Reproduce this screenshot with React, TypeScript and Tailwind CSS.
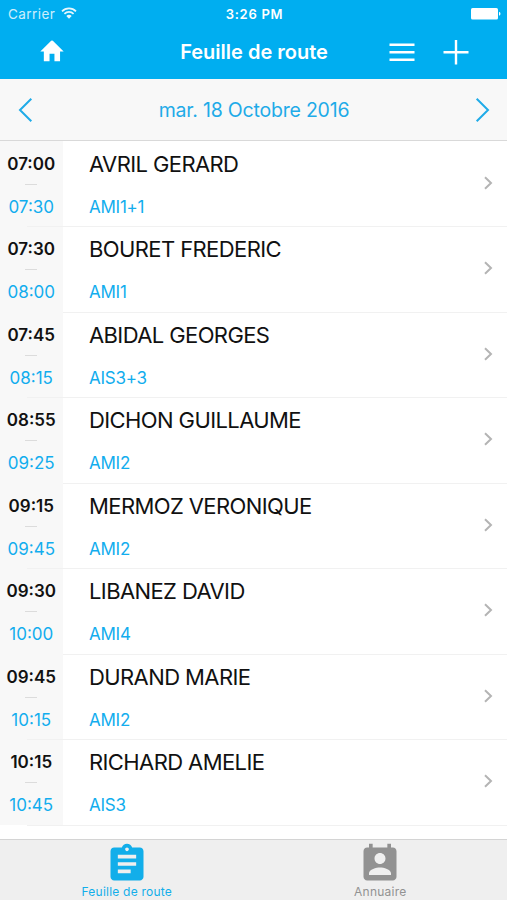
import type { ReactNode } from "react";

interface Visit {
  start: string;
  end: string;
  name: string;
  code: string;
}

const visits: Visit[] = [
  { start: "07:00", end: "07:30", name: "AVRIL GERARD", code: "AMI1+1" },
  { start: "07:30", end: "08:00", name: "BOURET FREDERIC", code: "AMI1" },
  { start: "07:45", end: "08:15", name: "ABIDAL GEORGES", code: "AIS3+3" },
  { start: "08:55", end: "09:25", name: "DICHON GUILLAUME", code: "AMI2" },
  { start: "09:15", end: "09:45", name: "MERMOZ VERONIQUE", code: "AMI2" },
  { start: "09:30", end: "10:00", name: "LIBANEZ DAVID", code: "AMI4" },
  { start: "09:45", end: "10:15", name: "DURAND MARIE", code: "AMI2" },
  { start: "10:15", end: "10:45", name: "RICHARD AMELIE", code: "AIS3" },
];

function StatusBar() {
  return (
    <div className="grid h-7 grid-cols-3 items-center pl-2 pr-[6px] text-[13.5px] leading-none">
      <div className="flex items-center gap-[6px]">
        <span className="pt-px tracking-[0.45px] opacity-80">Carrier</span>
        <svg width="16" height="12" viewBox="0 0 16 12" fill="none" stroke="currentColor" strokeWidth="1.7" className="-mt-[3px] opacity-90">
          <path d="M1 4.3C4.9 .3 11.1 .3 15 4.3" />
          <path d="M3.4 6.9C6 4.2 10 4.2 12.6 6.9" />
          <path d="M5.3 8.9C6.8 7.3 9.2 7.3 10.7 8.9L8 11.7z" fill="currentColor" stroke="none" />
        </svg>
      </div>
      <span className="text-center text-[13px] font-semibold tracking-[0.7px]">3:26 PM</span>
      <svg width="30" height="12" viewBox="0 0 30 12" fill="currentColor" className="justify-self-end">
        <rect x="0" y="0" width="27" height="11.5" rx="1.6" />
        <path d="M28 3.8c2 .8 2 3.2 0 4z" />
      </svg>
    </div>
  );
}

function NavBar() {
  return (
    <div className="flex h-[51px] items-start pl-[38px] pr-[37px] pt-[9px]">
      <button aria-label="Accueil" className="flex h-[30px] w-[90px] items-start">
        <svg width="28" height="29" viewBox="0 0 24 24" preserveAspectRatio="none" fill="currentColor">
          <path d="M9.9 20v-6.2h4.2V20h4.8v-8H22L12.7 3.2Q12 2.6 11.3 3.2L2 12h3v8z" />
        </svg>
      </button>
      <h1 className="flex-1 text-center text-[20px] font-semibold leading-[31px]">Feuille de route</h1>
      <div className="flex w-[90px] justify-end gap-[26px] pt-[1px]">
        <svg width="28" height="28" viewBox="0 0 28 28" stroke="currentColor" strokeWidth="2.4">
          <path d="M1.5 6.8h25M1.5 14.3h25M1.5 21.8h25" />
        </svg>
        <svg width="28" height="28" viewBox="0 0 28 28" stroke="currentColor" strokeWidth="2.4">
          <path d="M1.5 14.3h25M14 2v24.5" />
        </svg>
      </div>
    </div>
  );
}

function DayPicker() {
  return (
    <div className="flex h-[62px] items-center justify-between border-b border-[#d9d9d9] bg-[#f8f8f8] pl-[17px] pr-4 text-[#1fabe8]">
      <svg width="16" height="26" viewBox="0 0 16 26" fill="none" stroke="currentColor" strokeWidth="2">
        <path d="M14.3 1.7L3 13l11.3 11.3" />
      </svg>
      <span className="pt-[2px] text-[19.5px] leading-none tracking-[-0.2px]">mar. 18 Octobre 2016</span>
      <svg width="16" height="26" viewBox="0 0 16 26" fill="none" stroke="currentColor" strokeWidth="2">
        <path d="M1.7 1.7L13 13 1.7 24.3" />
      </svg>
    </div>
  );
}

function VisitRow({ start, end, name, code }: Visit) {
  return (
    <li className="relative flex h-[85.5px]">
      <div className="flex w-[62.5px] flex-col items-center bg-[#f8f8f8] pt-[12.5px] text-[17px] leading-5">
        <span className="font-semibold text-[#111]">{start}</span>
        <span className="mt-[10px] h-px w-3 bg-[#dcdcdc]" />
        <span className="mt-[12px] text-[#12adee]">{end}</span>
      </div>
      <div className="flex flex-1 flex-col pl-[26.5px] pt-[9.5px]">
        <span className="text-[22px] leading-[26px] tracking-[-0.6px] text-[#111]">{name}</span>
        <span className="mt-5 text-[17px] leading-5 tracking-[-0.25px] text-[#12adee]">{code}</span>
      </div>
      <svg width="10" height="14" viewBox="0 0 10 14" fill="none" stroke="#b4b4b4" strokeWidth="2" className="mr-[14px] mt-[34.5px]">
        <path d="M2 1.2L8 7 2 12.8" />
      </svg>
      <div className="absolute bottom-[-0.5px] left-[27px] right-0 h-px bg-[#f1f1f1]" />
    </li>
  );
}

function Tab({ label, className, children }: { label: string; className: string; children: ReactNode }) {
  return (
    <button className={`flex flex-1 flex-col items-center pt-[1.8px] ${className}`}>
      <svg width="44" height="44" viewBox="0 0 24 24" fill="currentColor">
        {children}
      </svg>
      <span className="-mt-[0.8px] text-[12px] leading-[14px] tracking-[0.22px]">{label}</span>
    </button>
  );
}

export default function App() {
  return (
    <div className="flex h-[900px] w-[507px] flex-col overflow-hidden bg-white font-['Inter',sans-serif]">
      <header className="h-[79px] bg-[#00aef0] text-white">
        <StatusBar />
        <NavBar />
      </header>
      <DayPicker />
      <ul className="flex-1">
        {visits.map((v) => (
          <VisitRow key={v.name} {...v} />
        ))}
      </ul>
      <nav className="flex h-[61px] border-t border-[#d4d4d4] bg-[#efefef]">
        <Tab label="Feuille de route" className="text-[#12aeea]">
          <path d="M19 3h-4.18C14.4 1.84 13.3 1 12 1c-1.3 0-2.4.84-2.82 2H5c-1.1 0-2 .9-2 2v14c0 1.1.9 2 2 2h14c1.1 0 2-.9 2-2V5c0-1.1-.9-2-2-2zm-7 0c.55 0 1 .45 1 1s-.45 1-1 1-1-.45-1-1 .45-1 1-1zm2 14H7v-2h7v2zm3-4H7v-2h10v2zm0-4H7V7h10v2z" />
        </Tab>
        <Tab label="Annuaire" className="text-[#929292]">
          <path d="M19 3h-1V1h-2v2H8V1H6v2H5c-1.11 0-2 .9-2 2v14c0 1.1.89 2 2 2h14c1.1 0 2-.9 2-2V5c0-1.1-.9-2-2-2zm-7 3c1.66 0 3 1.34 3 3s-1.34 3-3 3-3-1.34-3-3 1.34-3 3-3zm6 12H6v-1c0-2 4-3.1 6-3.1s6 1.1 6 3.1v1z" />
        </Tab>
      </nav>
    </div>
  );
}
